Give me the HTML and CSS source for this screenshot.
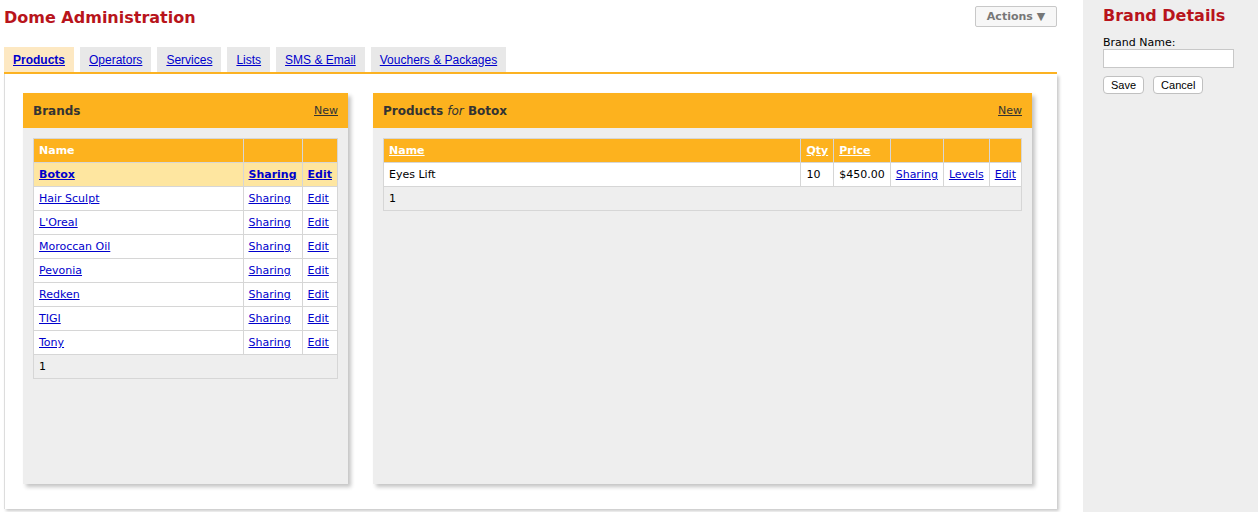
FILE: index.html
```html
<!DOCTYPE html>
<html>
<head>
 <title>Dome Administration</title>
 <link rel="stylesheet" href="styles.css">
</head>
<body>
<div class="page">
	<div class="main">
		<div class="top_bar">
			<h1 class="site_title">Dome Administration</h1>
			<button class="actions_btn">Actions &#9660;</button>
		</div>
		<ul class="tabs">
			<li class="tab active"><a href="#">Products</a></li>
			<li class="tab"><a href="#">Operators</a></li>
			<li class="tab"><a href="#">Services</a></li>
			<li class="tab"><a href="#">Lists</a></li>
			<li class="tab"><a href="#">SMS &amp; Email</a></li>
			<li class="tab"><a href="#">Vouchers &amp; Packages</a></li>
		</ul>
		<div class="content_box">
			<div class="panel brands_panel">
				<div class="panel_head">
					<span class="panel_title">Brands</span>
					<a class="new_link" href="#">New</a>
				</div>
				<table class="grid">
					<thead>
						<tr><th class="grow">Name</th><th></th><th></th></tr>
					</thead>
					<tbody>
						<tr class="selected"><td><a href="#">Botox</a></td><td><a href="#">Sharing</a></td><td><a href="#">Edit</a></td></tr>
						<tr><td><a href="#">Hair Sculpt</a></td><td><a href="#">Sharing</a></td><td><a href="#">Edit</a></td></tr>
						<tr><td><a href="#">L'Oreal</a></td><td><a href="#">Sharing</a></td><td><a href="#">Edit</a></td></tr>
						<tr><td><a href="#">Moroccan Oil</a></td><td><a href="#">Sharing</a></td><td><a href="#">Edit</a></td></tr>
						<tr><td><a href="#">Pevonia</a></td><td><a href="#">Sharing</a></td><td><a href="#">Edit</a></td></tr>
						<tr><td><a href="#">Redken</a></td><td><a href="#">Sharing</a></td><td><a href="#">Edit</a></td></tr>
						<tr><td><a href="#">TIGI</a></td><td><a href="#">Sharing</a></td><td><a href="#">Edit</a></td></tr>
						<tr><td><a href="#">Tony</a></td><td><a href="#">Sharing</a></td><td><a href="#">Edit</a></td></tr>
						<tr class="pager"><td colspan="3">1</td></tr>
					</tbody>
				</table>
			</div>
			<div class="panel products_panel">
				<div class="panel_head">
					<span class="panel_title">Products <i>for</i> Botox</span>
					<a class="new_link" href="#">New</a>
				</div>
				<table class="grid">
					<thead>
						<tr><th class="grow"><a href="#">Name</a></th><th><a href="#">Qty</a></th><th><a href="#">Price</a></th><th></th><th></th><th></th></tr>
					</thead>
					<tbody>
						<tr><td>Eyes Lift</td><td>10</td><td>$450.00</td><td><a href="#">Sharing</a></td><td><a href="#">Levels</a></td><td><a href="#">Edit</a></td></tr>
						<tr class="pager"><td colspan="6">1</td></tr>
					</tbody>
				</table>
			</div>
		</div>
	</div>
	<div class="sidebar">
		<h2 class="side_title">Brand Details</h2>
		<label class="field_label">Brand Name:</label>
		<input class="field_input" type="text">
		<div class="side_buttons">
			<button class="small_btn">Save</button>
			<button class="small_btn">Cancel</button>
		</div>
	</div>
</div>
</body>
</html>
```
FILE: styles.css
```css
	body {
		margin: 0;
		font-family: "DejaVu Sans", Verdana, sans-serif;
		font-size: 11px;
		color: #000000;
		background: #ffffff;
	}

	.page {
		display: flex;
		height: 512px;
		overflow: hidden;
	}

	.main {
		width: 1053px;
		padding: 0 26px 0 4px;
		flex: none;
	}

	.top_bar {
		display: flex;
		justify-content: space-between;
		align-items: flex-start;
		height: 47px;
	}

	.site_title {
		margin: 8px 0 0 0;
		font-size: 16px;
		font-weight: bold;
		color: #b8141b;
	}

	.actions_btn {
		margin-top: 6px;
		width: 82px;
		height: 21px;
		padding: 0;
		font-family: "DejaVu Sans", Verdana, sans-serif;
		font-size: 11px;
		font-weight: bold;
		color: #777777;
		background: #f7f7f7;
		border: 1px solid #c8c8c8;
		border-radius: 2px;
	}

	/* tabs */
	.tabs {
		display: flex;
		gap: 6px;
		margin: 0;
		padding: 0;
		list-style: none;
		border-bottom: 2px solid #fdb21e;
	}

	.tab {
		height: 25px;
		padding: 0 9px;
		background: #e8e8e8;
		font-family: "Liberation Sans", Arial, sans-serif;
		font-size: 12px;
		display: flex;
		align-items: center;
	}

	.tab a { color: #0000cc; }
	.tab.active { background: #fde8c2; }
	.tab.active a { font-weight: bold; }

	.content_box {
		display: flex;
		gap: 25px;
		height: 391px;
		padding: 19px 25px 25px 18px;
		border-left: 1px solid #dddddd;
		box-shadow: 2px 2px 3px #c8c8c8;
	}

	.panel {
		background: #eeeeee;
		box-shadow: 3px 3px 4px #c4c4c4;
	}

	.brands_panel { width: 325px; }
	.products_panel { flex: 1; }

	.panel_head {
		height: 35px;
		padding: 0 10px;
		background: #fdb21e;
		display: flex;
		justify-content: space-between;
		align-items: center;
	}

	.panel_title {
		font-size: 12px;
		font-weight: bold;
		color: #333333;
	}

	.panel_title i { font-weight: normal; }

	.new_link {
		font-size: 11px;
		color: #333333;
	}

	/* data grids */
	table.grid {
		margin: 10px;
		width: calc(100% - 20px);
		border-collapse: collapse;
		background: #ffffff;
	}

	table.grid th, table.grid td {
		height: 23px;
		padding: 0 5px;
		border: 1px solid #d6d6d6;
		text-align: left;
		white-space: nowrap;
	}

	table.grid th {
		background: #fdb21e;
		color: #ffffff;
		font-weight: bold;
	}

	table.grid th a { color: #ffffff; }
	table.grid td a { color: #0000cc; }
	table.grid .grow { width: 100%; }

	table.grid tr.selected td {
		background: #fee6a0;
		font-weight: bold;
	}

	table.grid tr.pager td { background: #eeeeee; }

	/* sidebar */
	.sidebar {
		flex: 1;
		background: #eeeeee;
		padding: 0 20px;
	}

	.side_title {
		margin: 6px 0 0 0;
		font-size: 16px;
		font-weight: bold;
		color: #b8141b;
	}

	.field_label {
		display: block;
		margin-top: 11px;
		font-size: 11px;
	}

	.field_input {
		display: block;
		box-sizing: border-box;
		width: 131px;
		height: 19px;
		margin: 0;
		border: 1px solid #c8c8c8;
		background: #ffffff;
	}

	.side_buttons {
		display: flex;
		gap: 9px;
		margin-top: 8px;
	}

	.small_btn {
		height: 18px;
		padding: 0 7px;
		font-family: "Liberation Sans", Arial, sans-serif;
		font-size: 11px;
		background: #ffffff;
		border: 1px solid #c0c0c0;
		border-radius: 4px;
	}
```
